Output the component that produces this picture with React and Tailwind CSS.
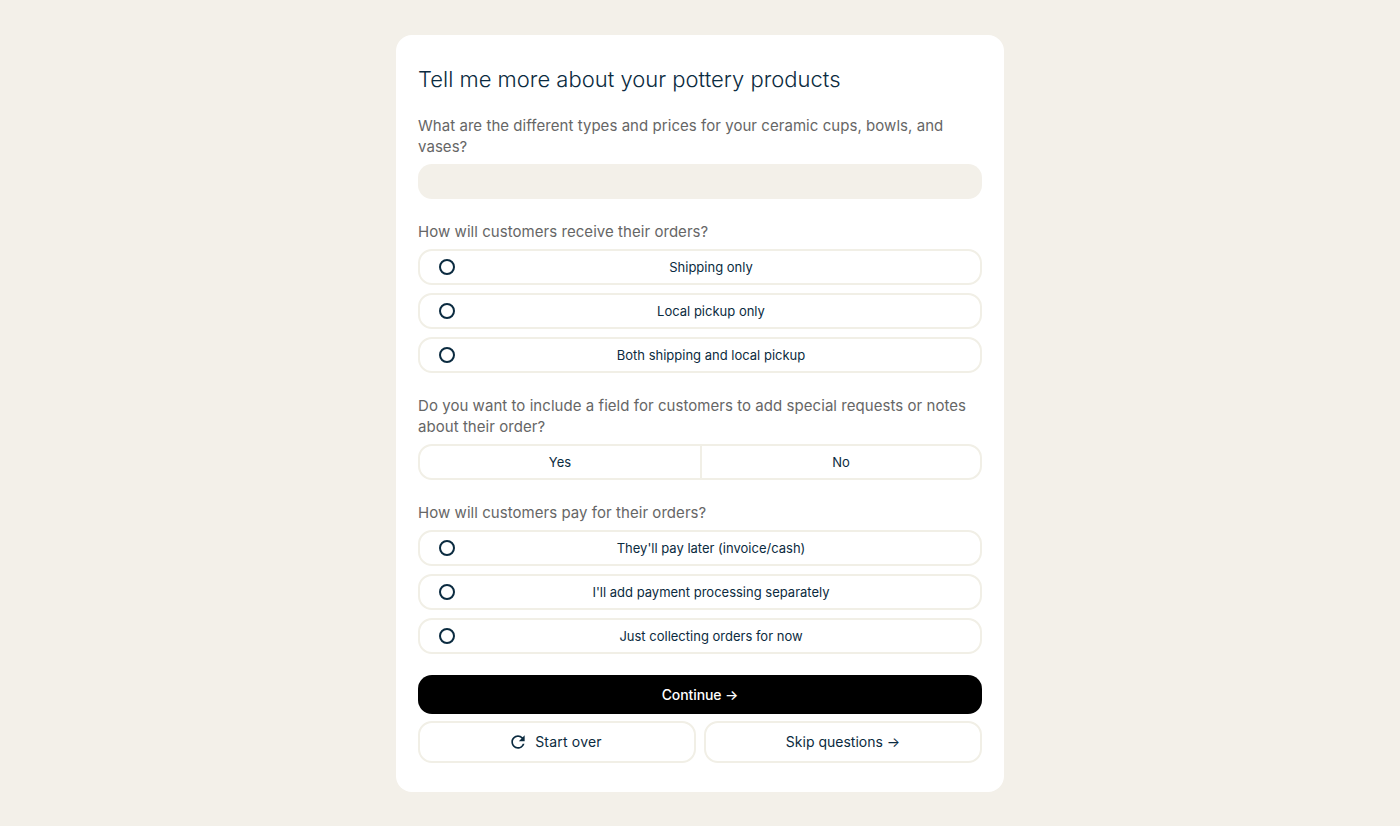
import { MdRefresh } from "react-icons/md";

const Question = ({ children }) => (
  <p className="mt-[22px] mb-[7px] text-[15px] leading-[21px] tracking-[0.05px] text-[#666666]">{children}</p>
);

const RadioRow = ({ label }) => (
  <button className="flex h-9 w-full items-center rounded-[14px] border-2 border-[#f1efe6] bg-white pl-[19px] pr-[13px] text-[13px] text-[#0b2b40]">
    <span className="h-4 w-4 shrink-0 rounded-full border-2 border-[#0b2b40]" />
    <span className="flex-1 pt-px text-center">{label}</span>
  </button>
);

export default function App() {
  return (
    <div className="min-h-screen bg-[#f3f0e9] pt-[35px] font-['Inter',sans-serif]">
      <div className="mx-auto h-[757px] w-[608px] rounded-2xl bg-white px-[22px] pt-[23px]">
        <h1 className="h-[44px] text-[22px] leading-[42px] font-light text-[#0b2b40]">Tell me more about your pottery products</h1>

        <p className="mt-[13px] mb-[7px] text-[15px] leading-[21px] tracking-[0.05px] text-[#666666]">
          What are the different types and prices for your ceramic cups, bowls, and vases?
        </p>
        <div className="h-[35px] rounded-[14px] bg-[#f3f0e9]" />

        <Question>How will customers receive their orders?</Question>
        <div className="flex flex-col gap-2">
          <RadioRow label="Shipping only" />
          <RadioRow label="Local pickup only" />
          <RadioRow label="Both shipping and local pickup" />
        </div>

        <Question>Do you want to include a field for customers to add special requests or notes about their order?</Question>
        <div className="flex h-9 rounded-[14px] border-2 border-[#f1efe6] text-[13px] text-[#0b2b40]">
          <button className="w-[282px] border-r-2 border-[#f1efe6] pt-px">Yes</button>
          <button className="flex-1 pt-px">No</button>
        </div>

        <Question>How will customers pay for their orders?</Question>
        <div className="flex flex-col gap-2">
          <RadioRow label="They'll pay later (invoice/cash)" />
          <RadioRow label="I'll add payment processing separately" />
          <RadioRow label="Just collecting orders for now" />
        </div>

        <button className="mt-[21px] h-[39px] w-full rounded-[14px] bg-black text-sm font-medium tracking-[-0.1px] text-white">Continue →</button>

        <div className="mt-[7px] grid grid-cols-2 gap-2">
          <button className="flex h-[42px] items-center justify-center gap-[7px] rounded-[14px] border-2 border-[#f1efe6] pr-1 text-sm tracking-[0.2px] text-[#0b2b40]">
            <MdRefresh size={20} />
            Start over
          </button>
          <button className="h-[42px] rounded-[14px] border-2 border-[#f1efe6] text-sm text-[#0b2b40]">Skip questions →</button>
        </div>
      </div>
    </div>
  );
}
